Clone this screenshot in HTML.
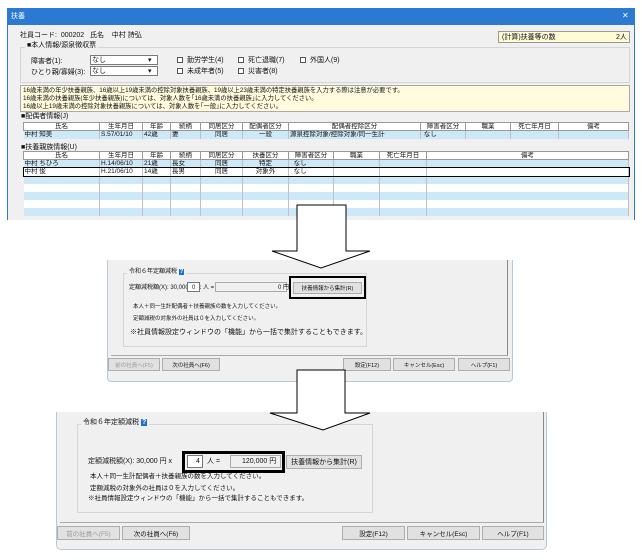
<!DOCTYPE html>
<html><head><meta charset="utf-8"><style>
*{box-sizing:border-box;margin:0;padding:0}
body{width:642px;height:560px;background:#fff;position:relative;overflow:hidden;font-family:"Liberation Sans","Noto Sans CJK JP",sans-serif;font-size:7px;color:#111}
.a{position:absolute;white-space:nowrap;line-height:1}
.box{position:absolute}
.btn{position:absolute;background:#e1e1e1;border:1px solid #adadad;text-align:center;font-size:6.5px;display:flex;align-items:center;justify-content:center}
.grp{position:absolute;border:1px solid #d5d5d5}
.cb{display:inline-block;width:6px;height:6px;border:1px solid #555;vertical-align:middle;margin-right:4px;background:#fff}
table{border-collapse:collapse;position:absolute;table-layout:fixed}
td{border-right:1px solid #c0c0c0;height:8px;font-size:6.5px;line-height:7px;white-space:nowrap;overflow:hidden;padding:0 1px}
tr.h td{background:#fff;border:1px solid #999;text-align:center}
tr.b td{background:#cde8f6}
tr.w td{background:#fff}
.c{text-align:center}
</style></head><body>
<div class="box" style="left:7px;top:8px;width:628px;height:212px;border:1px solid #2b79d0;border-bottom:none;background:#f0f0f0"></div>
<div class="box" style="left:7px;top:8px;width:628px;height:17px;background:#2b79d0"></div>
<div class="a" style="left:11px;top:13px;color:#fff;font-size:7px">扶養</div>
<div class="a" style="left:622px;top:12px;color:#fff;font-size:8px">✕</div>
<div class="a" style="left:20px;top:32px;font-size:7px">社員コード:&nbsp; 000202 &nbsp; 氏名 &nbsp;&nbsp; 中村 詩弘</div>
<div class="box" style="left:498px;top:31px;width:132px;height:12px;background:#fffbd5;border:1px solid #999"></div>
<div class="a" style="left:502px;top:34px">(計算)扶養等の数</div>
<div class="a" style="left:616px;top:34px">2人</div>
<div class="grp" style="left:20px;top:47px;width:610px;height:36px"></div>
<div class="a" style="left:25px;top:42px;background:#f0f0f0;padding:0 2px">■本人情報/源泉徴収票</div>
<div class="a" style="left:31px;top:58px">障害者(1):</div>
<div class="a" style="left:31px;top:69px">ひとり親/寡婦(3):</div>
<div class="box" style="left:90px;top:55px;width:68px;height:10px;background:#fff;border:1px solid #7a7a7a"></div>
<div class="a" style="left:92px;top:57px">なし</div><div class="a" style="left:148px;top:57px">▾</div>
<div class="box" style="left:90px;top:66px;width:68px;height:10px;background:#fff;border:1px solid #7a7a7a"></div>
<div class="a" style="left:92px;top:68px">なし</div><div class="a" style="left:148px;top:68px">▾</div>
<div class="a" style="left:177px;top:57px"><span class="cb"></span>勤労学生(4)</div>
<div class="a" style="left:238px;top:57px"><span class="cb"></span>死亡退職(7)</div>
<div class="a" style="left:300px;top:57px"><span class="cb"></span>外国人(9)</div>
<div class="a" style="left:177px;top:68px"><span class="cb"></span>未成年者(5)</div>
<div class="a" style="left:238px;top:68px"><span class="cb"></span>災害者(8)</div>
<div class="box" style="left:20px;top:85px;width:610px;height:27px;background:#fffbdc;border:1px solid #aaa"></div>
<div class="a" style="left:23px;top:87px;font-size:6.3px;line-height:8px">16歳未満の年少扶養親族、16歳以上19歳未満の控除対象扶養親族、19歳以上23歳未満の特定扶養親族を入力する際は注意が必要です。<br>16歳未満の扶養親族(年少扶養親族)については、対象人数を｢16歳未満の扶養親族｣に入力してください。<br>16歳以上19歳未満の控除対象扶養親族については、対象人数を｢一般｣に入力してください。</div>
<div class="a" style="left:21px;top:113px">■配偶者情報(J)</div>
<table style="left:23px;top:122px;width:605px">
<colgroup><col style="width:76px"><col style="width:43px"><col style="width:28px"><col style="width:30px"><col style="width:42px"><col style="width:46px"><col style="width:132px"><col style="width:45px"><col style="width:45px"><col style="width:48px"><col style="width:70px"></colgroup>
<tr class="h"><td>氏名</td><td>生年月日</td><td>年齢</td><td>続柄</td><td>同居区分</td><td>配偶者区分</td><td>配偶者控除区分</td><td>障害者区分</td><td>職業</td><td>死亡年月日</td><td>備考</td></tr>
<tr class="b"><td>中村 知美</td><td>S.57/01/10</td><td>42歳</td><td>妻</td><td class="c">同居</td><td class="c">一般</td><td>源泉控除対象/控除対象/同一生計</td><td>&nbsp;なし</td><td></td><td></td><td></td></tr>
</table>
<div class="a" style="left:21px;top:144px">■扶養親族情報(U)</div>
<table style="left:23px;top:151px;width:605px">
<colgroup><col style="width:76px"><col style="width:43px"><col style="width:28px"><col style="width:30px"><col style="width:42px"><col style="width:46px"><col style="width:45px"><col style="width:46px"><col style="width:47px"><col style="width:202px"></colgroup>
<tr class="h"><td>氏名</td><td>生年月日</td><td>年齢</td><td>続柄</td><td>同居区分</td><td>扶養区分</td><td>障害者区分</td><td>職業</td><td>死亡年月日</td><td>備考</td></tr>
<tr class="b"><td>中村 ちひろ</td><td>H.14/06/10</td><td>21歳</td><td>長女</td><td class="c">同居</td><td class="c">特定</td><td>&nbsp;&nbsp;なし</td><td></td><td></td><td></td></tr>
<tr class="w" style="outline:1.5px solid #000"><td>中村 俊</td><td>H.21/06/10</td><td>14歳</td><td>長男</td><td class="c">同居</td><td class="c">対象外</td><td>&nbsp;&nbsp;なし</td><td></td><td></td><td></td></tr>
<tr class="b"><td></td><td></td><td></td><td></td><td></td><td></td><td></td><td></td><td></td><td></td></tr>
<tr class="w"><td></td><td></td><td></td><td></td><td></td><td></td><td></td><td></td><td></td><td></td></tr>
<tr class="b"><td></td><td></td><td></td><td></td><td></td><td></td><td></td><td></td><td></td><td></td></tr>
<tr class="w"><td></td><td></td><td></td><td></td><td></td><td></td><td></td><td></td><td></td><td></td></tr>
<tr class="b"><td></td><td></td><td></td><td></td><td></td><td></td><td></td><td></td><td></td><td></td></tr>
</table>

<div class="box" style="left:107px;top:260px;width:406px;height:122px;background:#f0f0f0;border:1px solid #b5c8dc;border-top:none;border-radius:0 0 4px 4px"></div>
<div class="box" style="left:507px;top:260px;width:1px;height:96px;background:#888"></div>
<div class="box" style="left:111px;top:355px;width:397px;height:1px;background:#aaa"></div>
<div class="grp" style="left:123px;top:273px;width:244px;height:74px"></div>
<div class="a" style="left:127px;top:269px;background:#f0f0f0;padding:0 2px;font-size:6px">令和６年定額減税 <span style="background:#1c6fd0;color:#fff;padding:0 1px;font-weight:bold">?</span></div>
<div class="a" style="left:129px;top:285px;font-size:6px">定額減税額(X): 30,000 円 x</div>
<div class="box" style="left:187px;top:282px;width:13px;height:10px;background:#fff;border:1px solid #777"></div>
<div class="a" style="left:192px;top:285px;font-size:6px">0</div>
<div class="a" style="left:203px;top:285px;font-size:6px">人 =</div>
<div class="box" style="left:215px;top:282px;width:72px;height:10px;background:#f0f0f0;border:1px solid #aaa"></div>
<div class="a" style="left:278px;top:285px;font-size:6px">0 円</div>
<div class="btn" style="left:293px;top:282px;width:69px;height:12px;font-size:5.5px">扶養情報から集計(R)</div>
<div class="box" style="left:289px;top:276px;width:77px;height:23px;border:2.5px solid #000"></div>
<div class="a" style="left:133px;top:305px;font-size:5.5px">本人＋同一生計配偶者＋扶養親族の数を入力してください。</div>
<div class="a" style="left:133px;top:317px;font-size:5.5px">定額減税の対象外の社員は０を入力してください。</div>
<div class="a" style="left:130px;top:329px;font-size:7px">※社員情報設定ウィンドウの「機能」から一括で集計することもできます。</div>
<div class="btn" style="left:108px;top:358px;width:52px;height:13px;color:#999;font-size:5.5px">前の社員へ(F5)</div>
<div class="btn" style="left:162px;top:358px;width:58px;height:13px;font-size:5.5px">次の社員へ(F6)</div>
<div class="btn" style="left:343px;top:358px;width:48px;height:13px;font-size:5.5px">設定(F12)</div>
<div class="btn" style="left:393px;top:358px;width:62px;height:13px;font-size:5.5px">キャンセル(Esc)</div>
<div class="btn" style="left:458px;top:358px;width:52px;height:13px;font-size:5.5px">ヘルプ(F1)</div>

<div class="box" style="left:56px;top:412px;width:491px;height:138px;background:#f0f0f0;border:1px solid #b5c8dc;border-top:none;border-radius:0 0 5px 5px"></div>
<div class="box" style="left:543px;top:412px;width:1px;height:110px;background:#888"></div>
<div class="box" style="left:60px;top:522px;width:484px;height:1px;background:#aaa"></div>
<div class="grp" style="left:77px;top:424px;width:296px;height:89px"></div>
<div class="a" style="left:81px;top:419px;background:#f0f0f0;padding:0 2px;font-size:7px">令和６年定額減税 <span style="background:#1c6fd0;color:#fff;padding:0 1px;font-weight:bold">?</span></div>
<div class="a" style="left:88px;top:458px;font-size:7px">定額減税額(X): 30,000 円 x</div>
<div class="box" style="left:187px;top:455px;width:16px;height:13px;background:#fff;border:1px solid #777"></div>
<div class="a" style="left:196px;top:458px;font-size:7px">4</div>
<div class="a" style="left:207px;top:458px;font-size:7px">人 =</div>
<div class="box" style="left:230px;top:455px;width:51px;height:13px;background:#f0f0f0;border:1px solid #aaa"></div>
<div class="a" style="left:242px;top:458px;font-size:7px">120,000 円</div>
<div class="btn" style="left:286px;top:455px;width:76px;height:14px;font-size:7px">扶養情報から集計(R)</div>
<div class="box" style="left:182px;top:451px;width:103px;height:22px;border:3px solid #000"></div>
<div class="a" style="left:90px;top:474px;font-size:6.5px">本人＋同一生計配偶者＋扶養親族の数を入力してください。</div>
<div class="a" style="left:90px;top:486px;font-size:6.5px">定額減税の対象外の社員は０を入力してください。</div>
<div class="a" style="left:88px;top:496px;font-size:6.5px">※社員情報設定ウィンドウの「機能」から一括で集計することもできます。</div>
<div class="btn" style="left:57px;top:526px;width:63px;height:14px;color:#999;font-size:6.5px">前の社員へ(F5)</div>
<div class="btn" style="left:122px;top:526px;width:68px;height:14px;font-size:6.5px">次の社員へ(F6)</div>
<div class="btn" style="left:342px;top:526px;width:63px;height:14px;font-size:6.5px">設定(F12)</div>
<div class="btn" style="left:407px;top:526px;width:73px;height:14px;font-size:6.5px">キャンセル(Esc)</div>
<div class="btn" style="left:482px;top:526px;width:62px;height:14px;font-size:6.5px">ヘルプ(F1)</div>

<svg class="box" style="left:0;top:0" width="642" height="560">
<polygon points="297,205 346,205 346,251 370,251 321,268 272,251 297,251" fill="#fff" stroke="#000" stroke-width="1"/>
<polygon points="297,370 345,370 345,413 370,413 323,430 270,413 297,413" fill="#fff" stroke="#000" stroke-width="1"/>
</svg>
</body></html>
